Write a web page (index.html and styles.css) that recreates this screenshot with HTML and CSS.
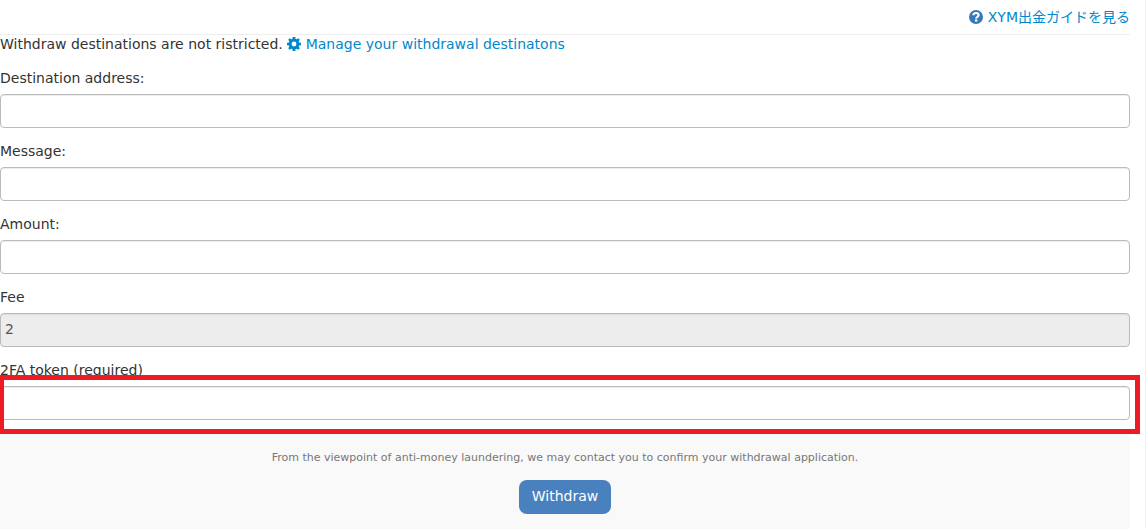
FILE: index.html
```html
<!DOCTYPE html>
<html lang="en">
<head>
    <meta charset="UTF-8">
    <meta name="viewport" content="width=device-width, initial-scale=1.0">
    <title>XYM Withdraw</title>
    <link rel="stylesheet" href="styles.css">
</head>
<body>
<main class="container">
    <div class="guide">
        <a href="#" lang="ja">
            <svg class="icon icon-help" viewBox="0 0 14 14" aria-hidden="true">
                <circle cx="7" cy="7" r="7"/>
                <path d="M4.4 5.3C4.5 3.7 5.6 3 7 3c1.5 0 2.6.8 2.6 2.2 0 1.7-2.4 1.6-2.4 3.3" fill="none" stroke="#fff" stroke-width="2.2"/>
                <path d="M6 9.4h2.3v2.2H6z" fill="#fff"/>
            </svg>
            XYM出金ガイドを見る</a>
    </div>

    <p class="notice">
        Withdraw destinations are not ristricted.
        <a href="#">
            <svg class="icon" viewBox="0 0 14 14" aria-hidden="true">
                <path fill-rule="evenodd" d="M5.7 0h2.6l.3 1.9 1 .4 1.6-1.1 1.6 1.6-1.1 1.600.4 1 1.900.3v2.600l-1.900.3-.4 1 1.100 1.600-1.600 1.600-1.600-1.100-1 .4L8.300 14H5.700l-.3-1.900-1-.4-1.600 1.100-1.600-1.600 1.100-1.600-.4-1L0 8.300V5.700l1.900-.3.4-1L1.200 2.800l1.600-1.600 1.600 1.100 1-.4zM7 4.600a2.400 2.400 0 1 0 0 4.800 2.400 2.400 0 0 0 0-4.800z"/>
            </svg>
            Manage your withdrawal destinatons</a>
    </p>

    <form id="withdrawForm">
        <div class="form-group">
            <label for="address">Destination address:</label>
            <input type="text" id="address" name="address">
        </div>

        <div class="form-group">
            <label for="message">Message:</label>
            <input type="text" id="message" name="message">
        </div>

        <div class="form-group">
            <label for="amount">Amount:</label>
            <input type="text" id="amount" name="amount">
        </div>

        <div class="form-group">
            <label for="fee">Fee</label>
            <input type="text" id="fee" name="fee" value="2" readonly>
        </div>

        <div class="form-group">
            <label for="token">2FA token (required)</label>
            <div class="highlight">
                <input type="text" id="token" name="token">
            </div>
        </div>

        <div class="form-actions">
            <p class="hint">From the viewpoint of anti-money laundering, we may contact you to confirm your withdrawal application.</p>
            <button type="submit" class="submit-btn">Withdraw</button>
        </div>
    </form>
</main>
</body>
</html>
```

FILE: styles.css
```css
* {
    box-sizing: border-box;
}

body {
    margin: 0;
    font-family: Verdana, "DejaVu Sans", "Noto Sans CJK JP", sans-serif;
    font-size: 14px;
    line-height: 20px;
    color: #333;
    background-color: #fff;
    overflow-x: hidden;
}

.container {
    min-height: 100vh;
    padding-right: 15px;
    border-right: 1px solid #f3f3f3;
}

a {
    color: #0088cc;
    text-decoration: none;
}

a:hover {
    text-decoration: underline;
}

.icon {
    width: 14px;
    height: 14px;
    vertical-align: -2px;
    fill: #0088cc;
}

.icon-help {
    fill: #337ab7;
}

.guide {
    padding: 7px 0;
    text-align: right;
    border-bottom: 1px solid #eee;
}

.notice {
    margin: 0 0 15px;
    line-height: 18px;
}

.form-group {
    margin-bottom: 13px;
}

label {
    display: block;
    margin-bottom: 6px;
}

input {
    display: block;
    width: 100%;
    height: 34px;
    padding: 4px 4px 6px;
    font: inherit;
    color: #555;
    background-color: #fff;
    border: 1px solid #bbb;
    border-radius: 4px;
    box-shadow: inset 0 1px 1px rgba(0, 0, 0, 0.075);
}

input[readonly] {
    background-color: #ededed;
}

/* red frame around the 2FA field */
.highlight {
    position: relative;
}

.highlight::after {
    content: "";
    position: absolute;
    top: -11px;
    right: -10px;
    bottom: -14px;
    left: -1px;
    border: 5px solid #ed1c24;
    pointer-events: none;
}

.form-actions {
    padding: 15px 20px 20px;
    text-align: center;
    background-color: #f9f9f9;
}

.hint {
    margin: 0 0 12px;
    font-size: 11px;
    color: #777;
}

.submit-btn {
    height: 34px;
    padding: 0 13px 2px;
    font: inherit;
    color: #fff;
    background-color: #4980be;
    border: none;
    border-radius: 8px;
    cursor: pointer;
}

.submit-btn:hover {
    background-color: #3a6da6;
}
```
